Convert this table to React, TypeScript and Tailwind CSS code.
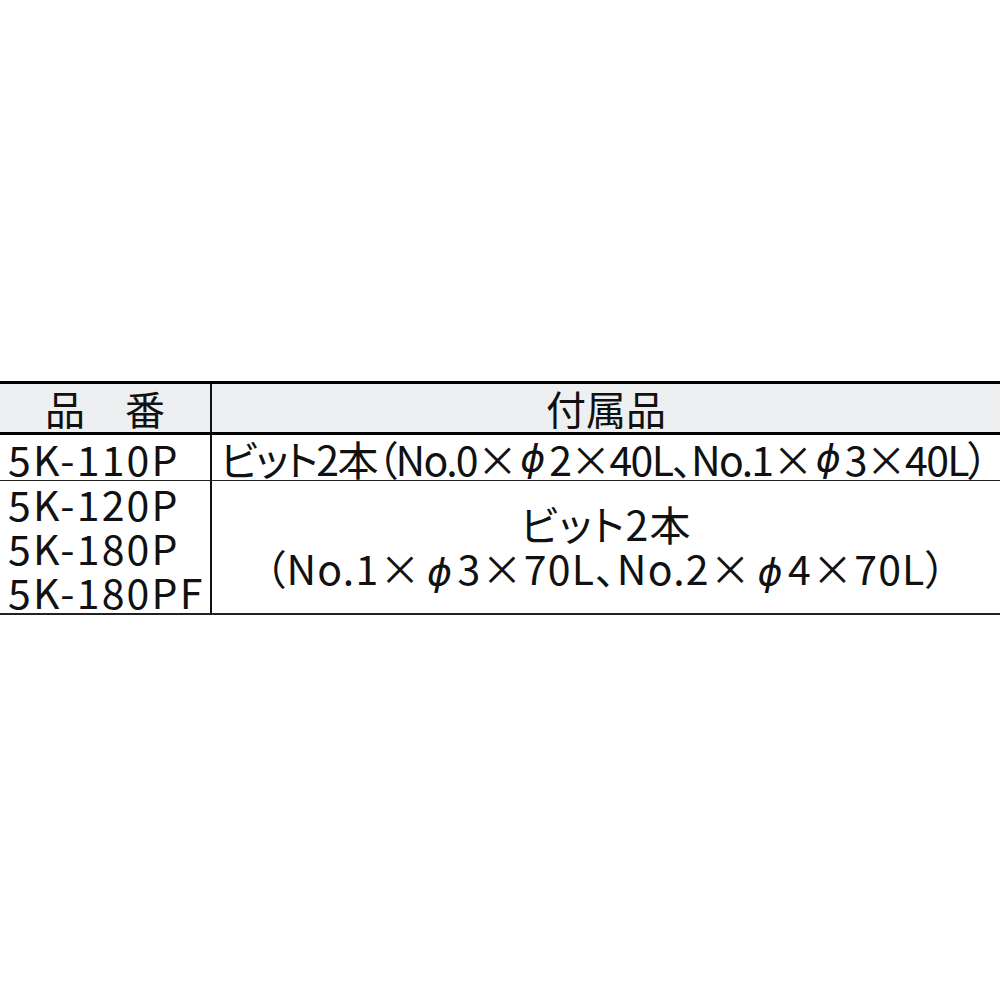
import React from "react";

function Phi({ w }: { w: "wide" | "narrow" }) {
  return (
    <span
      className={
        w === "wide"
          ? "inline-block w-[36px] text-center italic tracking-normal [font-family:'DejaVu_Sans',sans-serif] text-[38px]"
          : "inline-block w-[33px] text-center italic tracking-normal [font-family:'DejaVu_Sans',sans-serif] text-[38px]"
      }
    >
      ϕ
    </span>
  );
}

export default function App() {
  return (
    <div
      className="w-[1000px] h-[1000px] bg-white pt-[381px] text-[#111]"
      style={{ fontFamily: '"Noto Sans CJK JP", "Noto Sans", sans-serif' }}
    >
      <div className="border-t-[3px] border-black">
        {/* header */}
        <div className="flex h-[51px] bg-[#eeeff0] border-b-[3px] border-black text-[40px] leading-none">
          <div className="w-[212px] shrink-0 border-r-2 border-[#111] flex items-center justify-center">
            品　番
          </div>
          <div className="flex-1 flex items-center justify-center">付属品</div>
        </div>
        {/* row 1 */}
        <div className="flex h-[46px] border-b border-[#222] text-[41px] leading-[44px]">
          <div className="w-[212px] shrink-0 border-r-2 border-[#111] flex items-center pl-[8px] tracking-[2.2px]">
            5K-110P
          </div>
          <div className="flex-1 min-w-0 flex items-center pl-[8px] whitespace-nowrap [font-feature-settings:'palt'] tracking-[-1.7px]">
            ビット2本（No.0×<Phi w="narrow" />2×40L、No.1×<Phi w="narrow" />3×40L）
          </div>
        </div>
        {/* row 2 */}
        <div className="flex h-[134px] border-b-2 border-[#222] text-[41px] leading-[44px]">
          <div className="w-[212px] shrink-0 border-r-2 border-[#111] flex flex-col justify-center pl-[8px] tracking-[2.2px]">
            <div>5K-120P</div>
            <div>5K-180P</div>
            <div>5K-180PF</div>
          </div>
          <div className="flex-1 flex flex-col items-center justify-center whitespace-nowrap [font-feature-settings:'palt'] tracking-[1.2px]">
            <div>ビット2本</div>
            <div>（No.1×<Phi w="wide" />3×70L、No.2×<Phi w="wide" />4×70L）</div>
          </div>
        </div>
      </div>
    </div>
  );
}
